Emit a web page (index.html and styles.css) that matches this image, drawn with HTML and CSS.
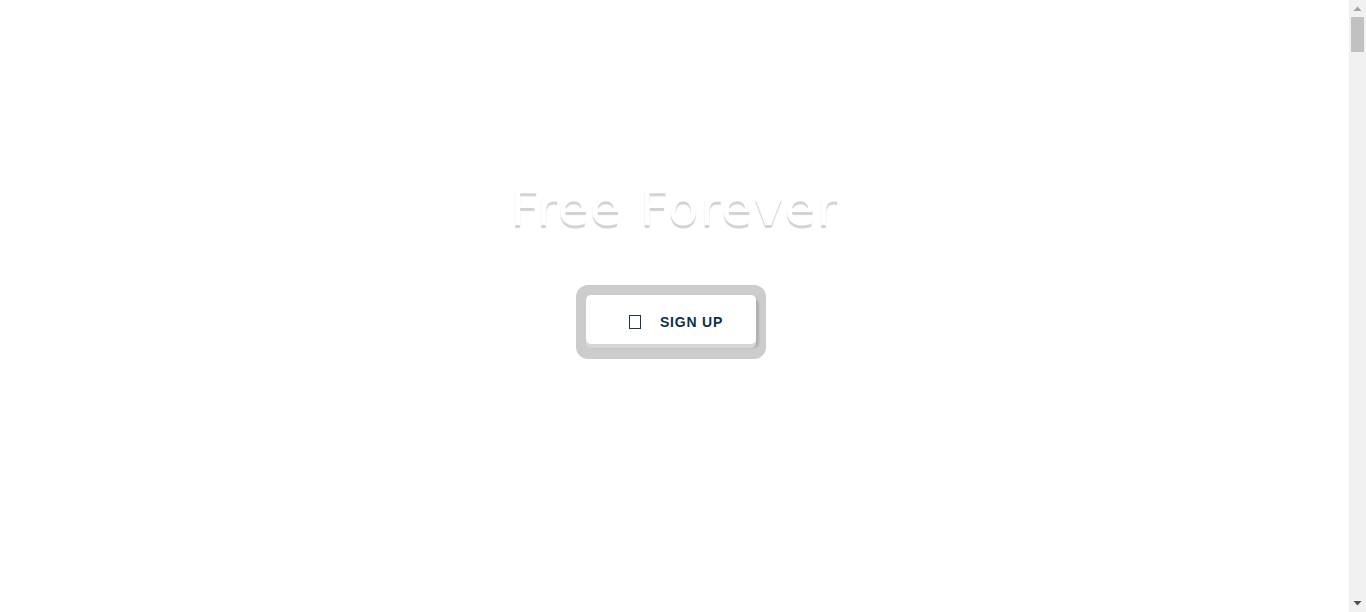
FILE: index.html
```html
<!DOCTYPE html>
<html lang="en">
<head>
<meta charset="utf-8">
<title>Free Forever</title>
<link rel="stylesheet" href="styles.css">
</head>
<body>
<main class="page">
  <section class="hero">
    <h1 class="hero-title">Free Forever</h1>
    <div class="cta-frame">
      <a class="cta" href="#"><span class="cta-icon"></span><span class="cta-label">SIGN UP</span></a>
    </div>
  </section>
</main>
<div class="scrollbar" aria-hidden="true">
  <div class="sb-btn">
    <svg width="17" height="17" viewBox="0 0 17 17"><polygon points="4.5,11 12.5,11 8.5,6.5" fill="#a3a3a3"/></svg>
  </div>
  <div class="sb-track"><div class="sb-thumb"></div></div>
  <div class="sb-btn">
    <svg width="17" height="17" viewBox="0 0 17 17"><polygon points="4.5,6 12.5,6 8.5,10.5" fill="#505050"/></svg>
  </div>
</div>
</body>
</html>
```
FILE: styles.css
```css
html, body {
  margin: 0;
  padding: 0;
  background: #ffffff;
}
.page {
  min-height: 1400px;
  margin-right: 17px;
}
.hero {
  display: flex;
  flex-direction: column;
  align-items: center;
  padding-top: 178px;
}
.hero-title {
  margin: 0;
  font-family: "DejaVu Sans", sans-serif;
  font-weight: 400;
  font-size: 50px;
  line-height: 60px;
  color: #ffffff;
  text-shadow: 0 3px 1px rgba(0,0,0,0.18);
  letter-spacing: 1.5px;
}
.cta-frame {
  margin-top: 47px;
  margin-right: 7px;
  background: #cccccc;
  padding: 10px 10px 15px 10px;
  border-radius: 12px;
}
.cta {
  display: flex;
  align-items: center;
  justify-content: center;
  width: 170px;
  height: 49px;
  box-sizing: border-box;
  padding: 4px 0 0 10px;
  background: #ffffff;
  border-radius: 5px;
  box-shadow: 0 4px 0 #d6d6d6, 3px 4px 2px #b0b0b0;
  text-decoration: none;
  gap: 19px;
}
.cta-icon {
  display: block;
  width: 10px;
  height: 12px;
  border: 1px solid #1a3550;
}
.cta-label {
  font-family: "Liberation Sans", sans-serif;
  font-weight: 700;
  font-size: 14px;
  letter-spacing: 0.8px;
  color: #0f2e4d;
}
.scrollbar {
  position: fixed;
  top: 0;
  right: 0;
  bottom: 0;
  width: 17px;
  background: #f1f1f1;
  display: flex;
  flex-direction: column;
}
.sb-btn {
  height: 17px;
  flex: none;
}
.sb-btn svg {
  display: block;
}
.sb-track {
  flex: 1;
  padding: 0 2px;
}
.sb-thumb {
  height: 35px;
  background: #c1c1c1;
}
```
